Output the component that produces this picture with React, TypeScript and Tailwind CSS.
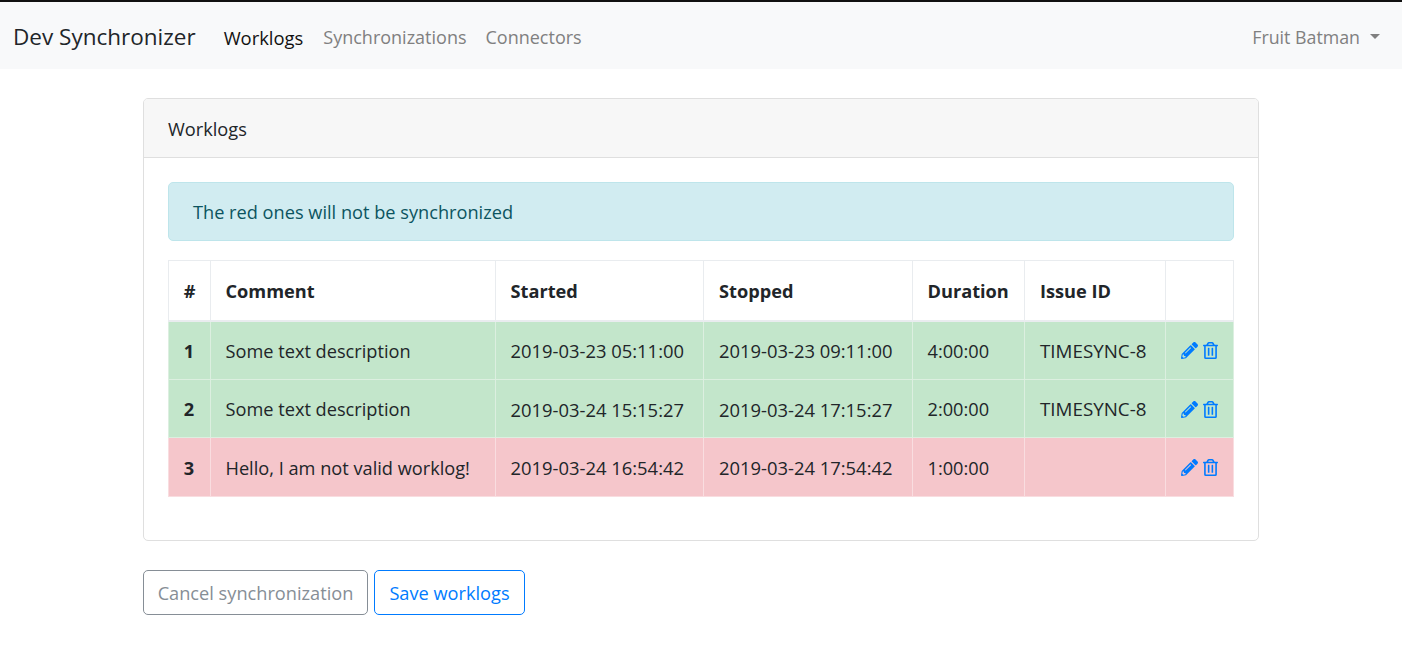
import React from "react";
import { FaPencilAlt, FaRegTrashAlt } from "react-icons/fa";

const rows = [
  { n: 1, c: "Some text description", a: "2019-03-23 05:11:00", b: "2019-03-23 09:11:00", d: "4:00:00", i: "TIMESYNC-8", ok: true, h: "h-[59px]" },
  { n: 2, c: "Some text description", a: "2019-03-24 15:15:27", b: "2019-03-24 17:15:27", d: "2:00:00", i: "TIMESYNC-8", ok: true, h: "h-[58px]" },
  { n: 3, c: "Hello, I am not valid worklog!", a: "2019-03-24 16:54:42", b: "2019-03-24 17:54:42", d: "1:00:00", i: "", ok: false, h: "h-[59px]" },
];
const heads = ["#", "Comment", "Started", "Stopped", "Duration", "Issue ID", ""];
const cellText = ["pt-[2px]", "text-[18.4px] pt-[1px]", "text-[18.4px] pt-[1px]", "pt-[2px]", "text-[18.8px] pt-[2px]"];
const headPad = ["px-0 text-center", "pl-[14.5px] text-left", "pl-[14.5px] text-left", "pl-[15px] text-left", "pl-[14.5px] text-left", "pl-[15px] text-left", ""];
const cellPad = ["pl-[14.5px]", "pl-[14.5px]", "pl-[15px]", "pl-[14.5px]", "pl-[15px]"];

export default function App() {
  return (
    <div className="min-h-[646px] bg-white text-[#212529] text-[18.2px] leading-[25px] font-['Open_Sans','Noto_Sans',sans-serif]">
      <nav className="h-[69px] bg-[#f8f9fa] border-t-2 border-[#111] flex items-center pl-[13px] pr-[22px]">
        <span className="text-[22.5px] leading-[32px] text-[#212529] mr-[28px] pt-[3px]">Dev Synchronizer</span>
        <div className="flex gap-[19px] pt-[4px]">
          <span className="text-[#111] text-[18.4px] mr-[1px]">Worklogs</span>
          <span className="text-[#808080] text-[18px]">Synchronizations</span>
          <span className="text-[#808080] text-[18px]">Connectors</span>
        </div>
        <div className="ml-auto flex items-center text-[#808080] text-[17.8px] pt-[4px]">
          <span>Fruit Batman</span>
          <span className="ml-[10px] mb-[2px] w-0 h-0 border-x-[5px] border-x-transparent border-t-[5px] border-t-[#808080]" />
        </div>
      </nav>
      <main className="w-[1116px] mx-auto pt-[29px]">
        <section className="h-[443px] border border-[#dfdfdf] rounded-[5px] overflow-hidden">
          <header className="h-[59px] px-[24px] pt-[2px] flex items-center bg-[#f7f7f7] border-b border-[#dfdfdf]">Worklogs</header>
          <div className="p-[24px]">
            <div className="h-[59px] px-[24px] pt-[2px] flex items-center bg-[#d1ecf1] border border-[#bee5eb] rounded-[5px] text-[#0c5460]">
              The red ones will not be synchronized
            </div>
            <table className="w-[1065px] mt-[19px] border-collapse table-fixed">
              <colgroup>
                <col className="w-[42px]" />
                <col className="w-[285px]" />
                <col className="w-[208px]" />
                <col className="w-[209px]" />
                <col className="w-[112px]" />
                <col className="w-[141px]" />
                <col className="w-[68px]" />
              </colgroup>
              <thead>
                <tr className="h-[60px]">
                  {heads.map((h, i) => (
                    <th key={i} className={`border border-[#e9ecef] border-b-2 font-bold pt-[2px] ${headPad[i]}`}>{h}</th>
                  ))}
                </tr>
              </thead>
              <tbody>
                {rows.map((r) => (
                  <tr key={r.n} className={`${r.h} ${r.ok ? "bg-[#c3e6cb]" : "bg-[#f5c6cb]"}`}>
                    <th className={`border font-bold text-center pt-[2px] pr-[1px] ${r.ok ? "border-[#dcefe0]" : "border-[#f9dde0]"}`}>{r.n}</th>
                    {[r.c, r.a, r.b, r.d, r.i].map((v, i) => (
                      <td key={i} className={`border whitespace-nowrap ${cellPad[i]} ${cellText[i]} ${r.ok ? "border-[#dcefe0]" : "border-[#f9dde0]"}`}>{v}</td>
                    ))}
                    <td className={`border px-[15px] ${r.ok ? "border-[#dcefe0]" : "border-[#f9dde0]"}`}>
                      <div className="flex items-center gap-[5px] mt-[1px] text-[#007bff]">
                        <FaPencilAlt className="w-[17px] h-[17px]" />
                        <FaRegTrashAlt className="w-[15px] h-[17px]" />
                      </div>
                    </td>
                  </tr>
                ))}
              </tbody>
            </table>
          </div>
        </section>
        <div className="mt-[29px] flex gap-[6px]">
          <button className="h-[45px] w-[225px] pt-[1px] border border-[#868e96] rounded-[5px] text-[#868e96]">Cancel synchronization</button>
          <button className="h-[45px] w-[151px] pt-[1px] border border-[#007bff] rounded-[5px] text-[#007bff]">Save worklogs</button>
        </div>
      </main>
    </div>
  );
}
